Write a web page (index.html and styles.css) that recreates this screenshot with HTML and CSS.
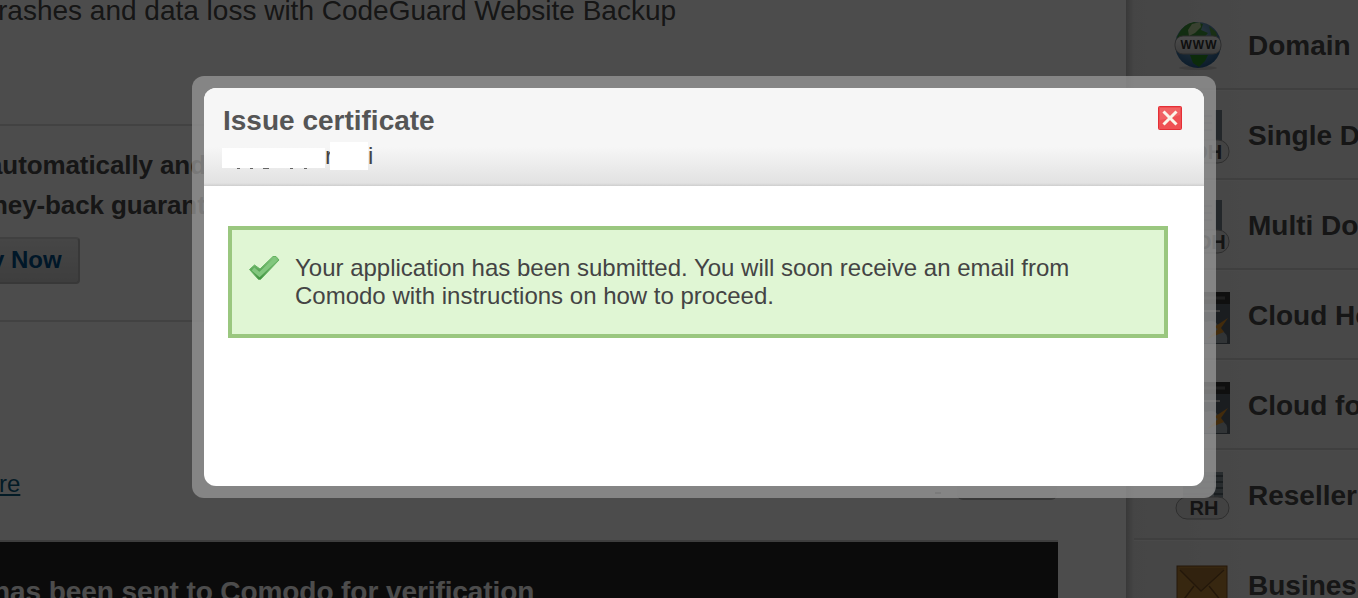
FILE: index.html
```html
<!DOCTYPE html>
<html lang="en">

<head>
    <meta charset="UTF-8">
    <title>Issue certificate</title>
    <link rel="stylesheet" href="styles.css">
</head>

<body>

    <div class="page">
        <div class="main">
            <div class="intro">rashes and data loss with CodeGuard Website Backup</div>
            <div class="offer">
                <p class="offer-first">automatically and</p>
                <p class="offer-second">ney-back guarantee</p>
                <button class="buy">y Now</button>
            </div>
            <div class="more">
                <a class="more-link" href="#">re</a>
                <span class="dash"></span>
                <span class="action"></span>
            </div>
            <div class="notice">has been sent to Comodo for verification</div>
        </div>

        <div class="sidebar">
            <div class="item">
                <svg class="icon" viewBox="0 0 56 60">
                    <defs>
                        <radialGradient id="globe" cx=".45" cy=".3" r=".7">
                            <stop offset="0" stop-color="#9cc5dc" />
                            <stop offset="1" stop-color="#285f92" />
                        </radialGradient>
                        <linearGradient id="pill" x2="0" y2="1">
                            <stop offset="0" stop-color="#fff" />
                            <stop offset="1" stop-color="#ccc" />
                        </linearGradient>
                    </defs>
                    <ellipse cx="24" cy="52" rx="19" ry="2" fill="#ccc" />
                    <circle cx="24" cy="29" r="23" fill="url(#globe)" />
                    <path d="M4 19Q9 8 20 6L29 8L27 14L34 17L28 24L18 22L10 26L2 24Z" fill="#3f9639" />
                    <path d="M14 14L18 8L26 6L27 11L21 17L15 20Z" fill="#bfd9a0" />
                    <path d="M16 39H34L31 45L25 51L19 47Z" fill="#299126" />
                    <path d="M35 10L42 16L44 24L38 22Z" fill="#549d45" />
                    <rect x="1" y="20" width="46" height="18" rx="8" fill="url(#pill)" stroke="#999" />
                    <text x="25" y="33" class="www" text-anchor="middle">WWW</text>
                </svg>
                <span>Domain</span>
            </div>
            <div class="item">
                <svg class="icon" viewBox="0 0 56 60">
                    <path d="M5 4H48V42H5Z" fill="#75838e" />
                    <path d="M5 4H41V42H5Z" fill="#cbd3d7" />
                    <path d="M8 10H38M8 17H38M8 24H38" stroke="#a5afb4" stroke-width="2" />
                    <rect x="1" y="34" width="54" height="23" rx="11" fill="#e0e0e0" stroke="#999" />
                    <text x="27" y="53" class="tag" text-anchor="middle">SDH</text>
                </svg>
                <span>Single Domain</span>
            </div>
            <div class="item">
                <svg class="icon" viewBox="0 0 56 60">
                    <path d="M5 4H48V42H5Z" fill="#75838e" />
                    <path d="M5 4H41V42H5Z" fill="#cbd3d7" />
                    <path d="M8 10H38M8 17H38M8 24H38" stroke="#a5afb4" stroke-width="2" />
                    <rect x="1" y="34" width="54" height="23" rx="11" fill="#e0e0e0" stroke="#999" />
                    <text x="29" y="53" class="tag" text-anchor="middle">MDH</text>
                </svg>
                <span>Multi Domain</span>
            </div>
            <div class="item">
                <svg class="icon" viewBox="0 0 56 60">
                    <rect x="2" y="6" width="54" height="52" fill="#59636d" />
                    <path d="M2 6H56V18H2Z" fill="#343434" />
                    <path d="M8 12H51" stroke="#666" stroke-width="3" />
                    <path d="M12 25H46" stroke="#ccc" stroke-width="2" />
                    <path d="M5 52Q3 42 14 42Q19 29 32 36Q43 32 46 44Q55 47 53 57H8Z" fill="#a4adb4" />
                    <path d="M54 32L40 41L44 43L33 53L50 46L47 42Z" fill="#dc8f28" />
                </svg>
                <span>Cloud Hosting</span>
            </div>
            <div class="item">
                <svg class="icon" viewBox="0 0 56 60">
                    <rect x="2" y="6" width="54" height="52" fill="#59636d" />
                    <path d="M2 6H56V18H2Z" fill="#343434" />
                    <path d="M8 12H51" stroke="#666" stroke-width="3" />
                    <path d="M12 25H46" stroke="#ccc" stroke-width="2" />
                    <path d="M5 52Q3 42 14 42Q19 29 32 36Q43 32 46 44Q55 47 53 57H8Z" fill="#a4adb4" />
                    <path d="M54 32L40 41L44 43L33 53L50 46L47 42Z" fill="#dc8f28" />
                </svg>
                <span>Cloud for</span>
            </div>
            <div class="item">
                <svg class="icon" viewBox="0 0 56 60">
                    <path d="M9 6H49V42H9Z" fill="#85939c" />
                    <path d="M9 10H49M9 16H49M9 22H49M9 28H49" stroke="#59656d" stroke-width="2" />
                    <path d="M9 6H40V42H9Z" fill="#c5cfd4" opacity=".7" />
                    <rect x="2" y="31" width="53" height="22" rx="11" fill="#dedede" stroke="#999" />
                    <text x="30" y="49" class="tag" text-anchor="middle">RH</text>
                </svg>
                <span>Reseller</span>
            </div>
            <div class="item">
                <svg class="icon" viewBox="0 0 56 60">
                    <rect x="3" y="10" width="50" height="42" fill="#b98338" stroke="#7b5020" />
                    <path d="M5 12H51L27 34Z" fill="#a57435" />
                    <path d="M6 14L27 35L50 14M4 51L20 30M52 51L35 30" fill="none" stroke="#754e22" stroke-width="1.5" />
                </svg>
                <span>Business</span>
            </div>
        </div>
    </div>

    <div class="overlay">
        <div class="modal">
            <div class="modal-body">
                <div class="modal-head">
                    <div>
                        <h1>Issue certificate</h1>
                        <div class="domain">
                            <span class="mask mask-long"></span>
                            <span class="letter">r</span>
                            <span class="mask mask-short"></span>
                            <span class="letter">i</span>
                        </div>
                        <svg class="descenders" viewBox="0 0 104 1">
                            <path d="M15 .5h3M28 .5h3M41 .5h6M68 .5h3M82 .5h3" stroke="#666" />
                        </svg>
                    </div>
                    <svg class="close" viewBox="0 0 24 24">
                        <rect x=".5" y=".5" width="23" height="23" rx="1" fill="#ef5053" stroke="#e42f36" />
                        <path d="M2 2H22V9Q12 13 2 14Z" fill="#f17070" opacity=".6" />
                        <path d="M5.500 5.500L18.500 18.500M18.500 5.500L5.500 18.500" stroke="#fbf5e9" stroke-width="3" />
                    </svg>
                </div>
                <div class="message">
                    <svg class="check" viewBox="0 0 32 26">
                        <defs>
                            <linearGradient id="tick" x2="0" y2="1">
                                <stop offset="0" stop-color="#83c77e" />
                                <stop offset="1" stop-color="#3f923f" />
                            </linearGradient>
                        </defs>
                        <path d="M1.500 14.500L6.500 10L12 14L25 1.500H28L31 5L12.500 24.500H10.500Z" fill="url(#tick)" stroke="#65b361" />
                        <path d="M5 14L11.500 19.500L28 4" fill="none" stroke="#82c77e" stroke-width="4" />
                    </svg>
                    <p>Your application has been submitted. You will soon receive an email from<br>Comodo with instructions on how to proceed.</p>
                </div>
            </div>
        </div>
    </div>

</body>

</html>
```
FILE: styles.css
```css
* {
    box-sizing: border-box;
}

body {
    margin: 0;
    font-family: "Liberation Sans", Arial, sans-serif;
    color: #4a4a4a;
    background: #fff;
    overflow: hidden;
}

h1,
p {
    margin: 0;
}

.page {
    display: flex;
    height: 598px;
    overflow: hidden;
    white-space: nowrap;
}

.main {
    width: 1126px;
    flex: none;
    overflow: hidden;
}

.intro {
    height: 124px;
    margin-left: -2px;
    font-size: 28px;
    line-height: 22px;
}

.offer {
    height: 198px;
    border-top: 2px solid #dcdcdc;
    border-bottom: 2px solid #dcdcdc;
    padding-top: 19px;
    font-size: 26px;
    font-weight: bold;
    line-height: 40px;
}

.offer-first {
    margin-left: -12px;
    letter-spacing: -.1px;
}

.offer-second {
    margin-left: -8px;
    letter-spacing: -.1px;
}

.buy {
    display: block;
    width: 84px;
    height: 47px;
    margin: 12px 0 0 -4px;
    padding: 0 17px 2px 0;
    text-align: right;
    text-indent: -7px;
    font: bold 24px "Liberation Sans", Arial, sans-serif;
    color: #004d88;
    background: linear-gradient(#eaeaea, #cfcfcf);
    border: 2px solid #bcbcbc;
    border-top-color: #d8d8d8;
    border-radius: 4px;
}

.more {
    display: flex;
    height: 218px;
    align-items: flex-start;
    padding-top: 147px;
}

.more-link {
    width: 936px;
    margin-left: -1px;
    font-size: 24px;
    line-height: 30px;
    color: #0d5c80;
    text-decoration-thickness: 2px;
    text-underline-offset: 2px;
}

.dash {
    width: 6px;
    height: 2px;
    margin-top: 23px;
    background: #777;
}

.action {
    width: 100px;
    height: 31px;
    margin-left: 16px;
    border-bottom: 2px solid #bbb;
    border-radius: 6px;
    background: #eee;
}

.notice {
    width: 1058px;
    height: 58px;
    padding-top: 33px;
    border-top: 2px solid #d0d0d0;
    font-size: 28px;
    font-weight: bold;
    line-height: 34px;
    letter-spacing: -.08px;
    color: #fff;
    background: #262626;
    text-indent: -7px;
}

.sidebar {
    flex: 1;
    overflow: hidden;
    background: linear-gradient(90deg, #bdbdbd, #e8e8e8 8px, #f0f0f0 50%, #f1f1f1);
}

.item {
    display: flex;
    align-items: center;
    height: 90px;
    margin-left: 8px;
    padding-left: 40px;
    border-bottom: 2px solid #d3d3d3;
    box-shadow: 0 1px #f6f6f6;
    font-size: 28px;
    font-weight: bold;
}

.item > span {
    margin-top: 4px;
}

.icon {
    flex: none;
    width: 56px;
    height: 60px;
    margin: 4px 18px 0 0;
}

.www {
    font-size: 12px;
    font-weight: bold;
    letter-spacing: 1px;
    fill: #333;
}

.tag {
    font-size: 20px;
    font-weight: bold;
    fill: #444;
}

.overlay {
    position: fixed;
    inset: 0;
    padding: 76px 0 0 192px;
    background: rgba(0, 0, 0, .7);
}

.modal {
    width: 1024px;
    height: 422px;
    padding: 12px;
    border-radius: 12px;
    background: rgba(150, 150, 150, .77);
}

.modal-body {
    height: 398px;
    border-radius: 12px;
    background: #fff;
    overflow: hidden;
}

.modal-head {
    display: flex;
    justify-content: space-between;
    height: 98px;
    padding: 16px 22px 0 18px;
    background: linear-gradient(#f6f6f6, #f6f6f6 60%, #e2e2e2 97%, #cecece);
}

.modal-head h1 {
    height: 38px;
    padding: 1px 0 0 1px;
    font-size: 28px;
    line-height: 32px;
    color: #555;
}

.domain {
    display: flex;
    height: 28px;
    font-size: 24px;
    line-height: 27px;
    color: #444;
}

.mask {
    background: #fff;
}

.mask-long {
    width: 103px;
    height: 20px;
    margin-top: 6px;
}

.mask-short {
    width: 38px;
    height: 28px;
}

.letter {
    width: 5px;
    overflow: hidden;
}

.descenders {
    display: block;
    width: 104px;
    height: 1px;
    margin-top: -2px;
}

.close {
    width: 24px;
    height: 24px;
    margin-top: 2px;
}

.message {
    display: flex;
    width: 940px;
    height: 112px;
    margin: 40px 0 0 24px;
    padding: 24px 0 0 16px;
    border: 4px solid #9ac77f;
    background: #e0f6d4;
    font-size: 24px;
    line-height: 28px;
    white-space: nowrap;
    color: #444;
}

.check {
    flex: none;
    width: 32px;
    height: 26px;
    margin: 1px 15px 0 0;
}
```
